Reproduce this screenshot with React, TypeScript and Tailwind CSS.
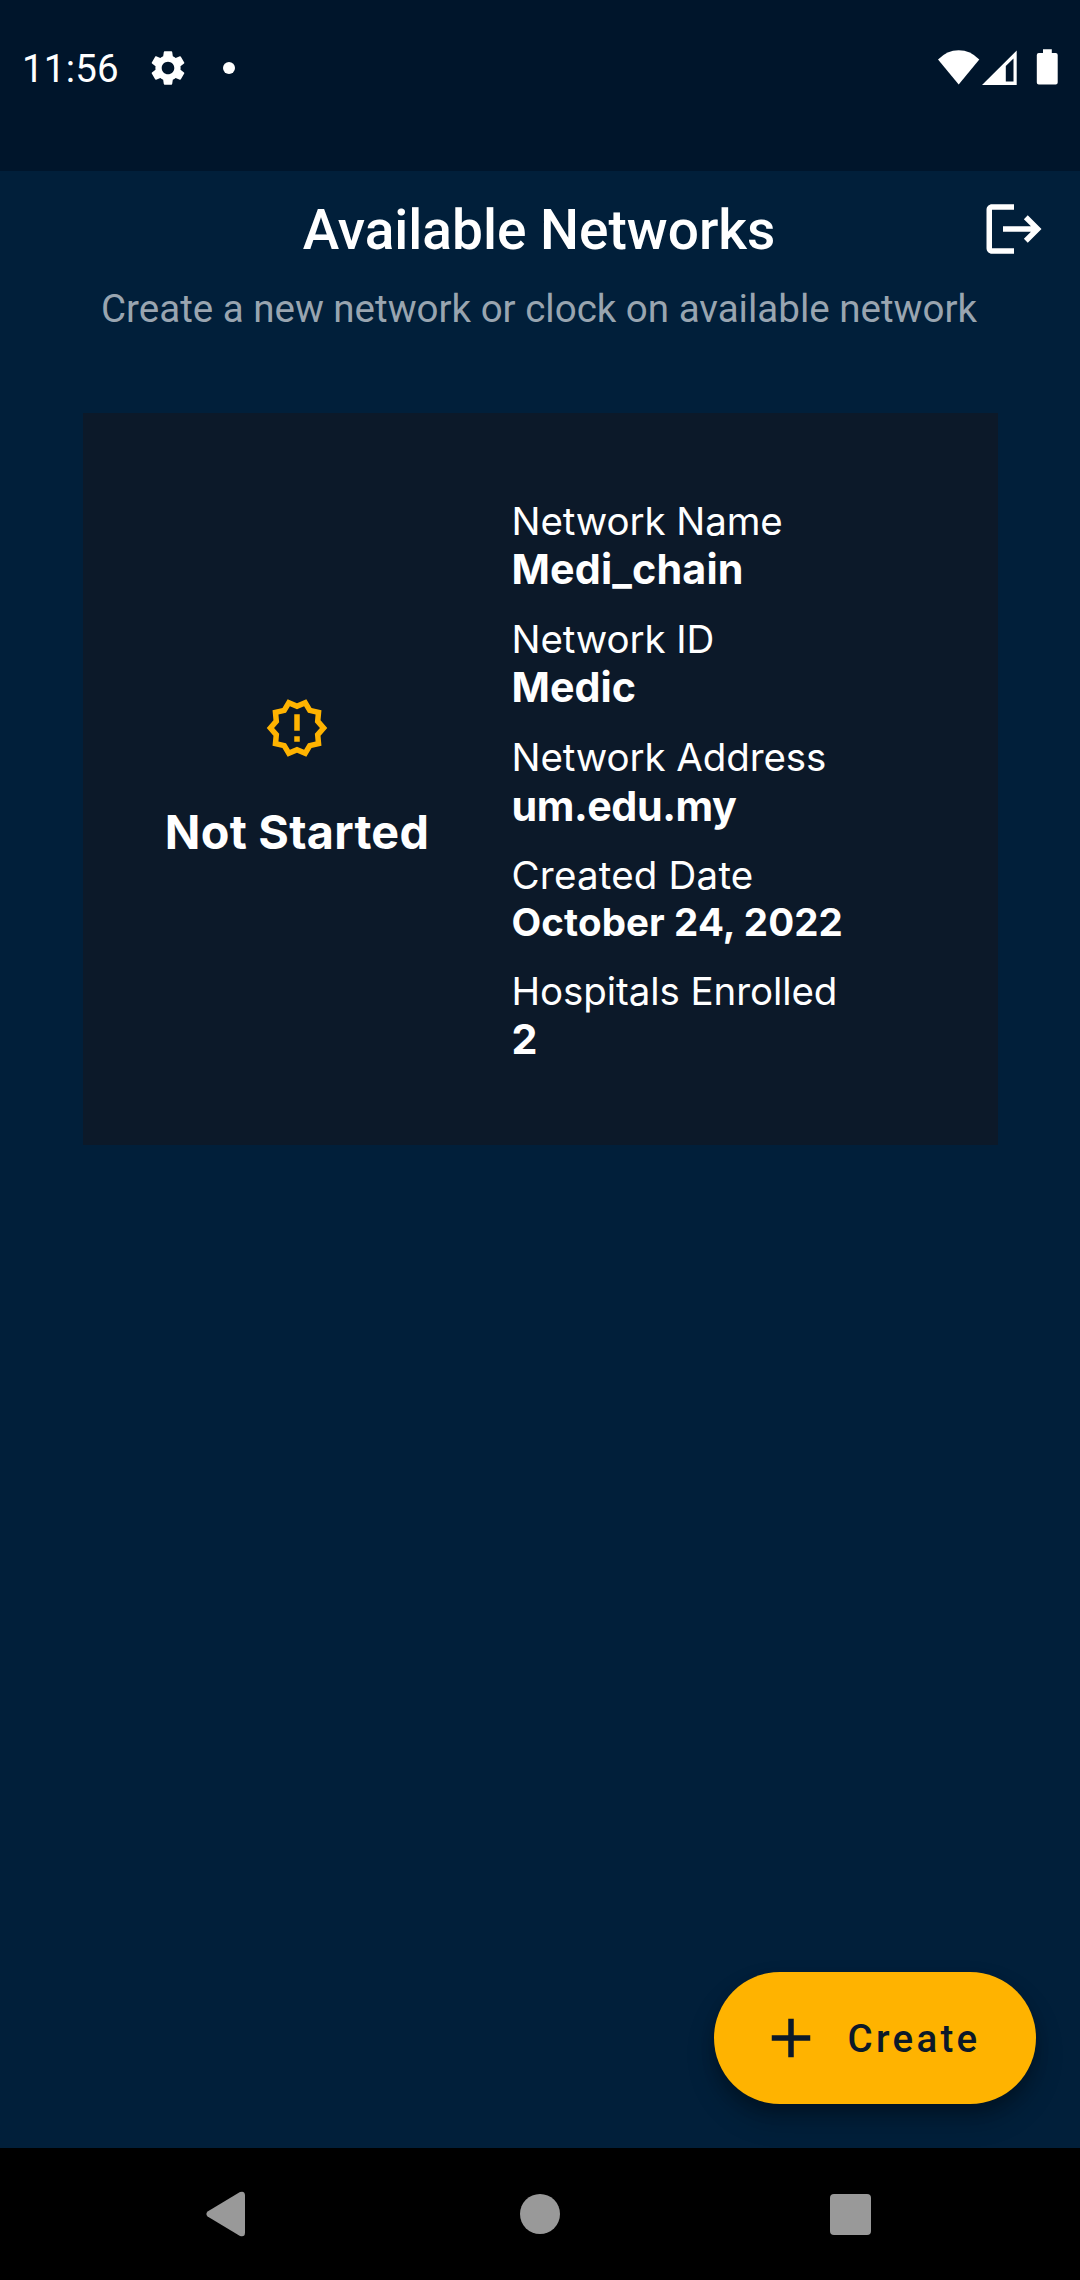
import { MdLogout, MdOutlineNewReleases, MdSettings, MdAdd } from "react-icons/md";

const details = [
  { label: "Network Name", labelClass: "tracking-[-0.1px]", value: "Medi_chain", valueClass: "text-[41.25px] leading-[50px] tracking-[0.15px]" },
  { label: "Network ID", labelClass: "tracking-[-0.1px]", value: "Medic", valueClass: "text-[41.25px] leading-[50px]" },
  { label: "Network Address", labelClass: "tracking-[-0.1px]", value: "um.edu.my", valueClass: "text-[41.25px] leading-[50px] pt-px -mb-px tracking-[-0.45px]" },
  { label: "Created Date", labelClass: "tracking-[0.2px]", value: "October 24, 2022", valueClass: "text-[38.5px] leading-[47px] pt-px tracking-[0.12px]" },
  { label: "Hospitals Enrolled", labelClass: "tracking-[-0.08px]", value: "2", valueClass: "text-[41.25px] leading-[50px]" },
];

function StatusBar() {
  return (
    <div className="flex h-[171px] items-start justify-between bg-[#00152b] pt-[47px] pr-[21px] pl-[22px]">
      <div className="flex h-[42px] items-center">
        <span className="w-[125px] pt-[2px] text-[38.5px] leading-[46px] tracking-[0.2px] text-white">11:56</span>
        <MdSettings className="size-[42px] text-white" />
        <span className="ml-[34px] size-3 rounded-full bg-white" />
      </div>
      <div className="flex pt-[2px]">
        <svg className="h-[36px] w-[42px]" viewBox="0 0 42 36" fill="#fff">
          <path d="M0 10.5Q9 1.2 20.7 1.2T41.3 10.5L20.7 35.5Z" />
        </svg>
        <svg className="ml-[2px] h-[36px] w-[36px]" viewBox="0 0 36 36" fill="#fff" fillRule="evenodd">
          <path d="M0 36L34.7 1.5V36ZM23.8 32.5H31.5V9.5L23.8 17Z" />
        </svg>
        <svg className="ml-[18px] h-[36px] w-[23px]" viewBox="0 0 23 36" fill="#fff">
          <path d="M7 0.3H15.8V4H19.7Q21.7 4 21.7 6V33.5Q21.7 35.5 19.7 35.5H2.8Q0.8 35.5 0.8 33.5V6Q0.8 4 2.8 4H7Z" />
        </svg>
      </div>
    </div>
  );
}

function Header() {
  return (
    <header className="relative flex flex-col items-center pt-[27px]">
      <h1 className="pr-[2px] text-[55px] leading-[64px] font-medium whitespace-nowrap text-white">Available Networks</h1>
      <p className="mt-[25px] pr-[2px] text-[38.5px] leading-[44px] whitespace-nowrap text-[#99a5b0]">
        Create a new network or clock on available network
      </p>
      <button className="absolute top-[25px] right-[33.5px]" aria-label="Log out">
        <MdLogout className="size-[66px] text-white" />
      </button>
    </header>
  );
}

function NetworkCard() {
  return (
    <section className="mr-[82px] ml-[82.5px] mt-[82px] flex h-[732px] bg-[#0c1929] font-['Inter',sans-serif] text-white">
      <div className="flex w-[429px] flex-col items-center pt-[282px]">
        <MdOutlineNewReleases className="size-[66px] text-[#ffb300]" />
        <p className="mt-[41px] text-[46.75px] leading-[60px] font-bold tracking-[0.25px] whitespace-nowrap">Not Started</p>
      </div>
      <dl className="flex flex-col gap-[22px] pt-[85px] whitespace-nowrap">
        {details.map((d) => (
          <div key={d.label}>
            <dt className={`text-[38.5px] leading-[46px] font-normal ${d.labelClass}`}>{d.label}</dt>
            <dd className={`font-bold ${d.valueClass}`}>{d.value}</dd>
          </div>
        ))}
      </dl>
    </section>
  );
}

function NavigationBar() {
  return (
    <nav className="flex h-[132px] items-center justify-between bg-black pr-[209px] pl-[206px]">
      <svg className="h-[46px] w-[40px]" viewBox="0 0 40 46" fill="#999">
        <path d="M1.6 20.6L34 1Q39 -0.5 39 4.5V41.5Q39 46.5 34 45L1.6 25.4Q-0.8 23 1.6 20.6Z" />
      </svg>
      <span className="ml-1 size-10 rounded-full bg-[#999]" />
      <span className="size-[41px] rounded-[4px] bg-[#999]" />
    </nav>
  );
}

export default function App() {
  return (
    <div className="flex h-[2280px] w-[1080px] flex-col overflow-hidden bg-[#011f3a] font-['Roboto',sans-serif]">
      <StatusBar />
      <main className="flex flex-1 flex-col">
        <Header />
        <NetworkCard />
        <button className="mt-auto mr-[44px] mb-[44px] flex h-[132px] w-[322px] items-center self-end rounded-full bg-[#ffb300] pl-[44px] text-[#0c1929] shadow-[0_16px_28px_rgba(0,0,0,0.22),0_8px_14px_rgba(0,0,0,0.2)]">
          <MdAdd className="size-[66px]" />
          <span className="ml-[23.5px] pt-[2px] text-[38.5px] leading-[46px] font-medium tracking-[3.3px]">Create</span>
        </button>
      </main>
      <NavigationBar />
    </div>
  );
}
